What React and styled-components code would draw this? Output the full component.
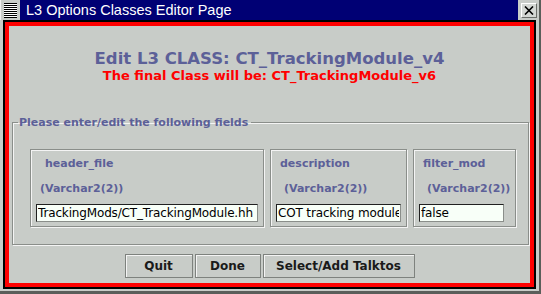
import React from "react";
import styled, { createGlobalStyle } from "styled-components";

const GlobalStyle = createGlobalStyle`
  html, body {
    margin: 0;
    padding: 0;
    background: #c8ccc8;
  }
`;

const Window = styled.div`
  display: flex;
  flex-direction: column;
  width: 541px;
  height: 294px;
  box-sizing: border-box;
  background: #c8ccc8;
  border-right: 2px solid #5a5e5a;
  border-bottom: 3px solid #5a5e5a;
  font-family: "DejaVu Sans", sans-serif;
`;

const TitleBar = styled.div`
  display: flex;
  align-items: stretch;
  height: 20px;
  flex-shrink: 0;
`;

const MenuBox = styled.div`
  width: 20px;
  box-sizing: border-box;
  padding: 3px 3px 2px 3px;
  background: #c8ccc8;
  border-left: 1px solid #f0f0f0;
`;

const MenuLines = styled.div`
  width: 100%;
  height: 100%;
  background: repeating-linear-gradient(
    to bottom,
    #000 0px,
    #000 1px,
    #fff 1px,
    #fff 2px
  );
`;

const TitleText = styled.div`
  flex: 1;
  display: flex;
  align-items: center;
  padding-left: 6px;
  background: #000074;
  color: #fff;
  font-family: "Liberation Sans", sans-serif;
  font-size: 14.5px;
`;

const CloseArea = styled.div`
  width: 21px;
  display: flex;
  align-items: center;
  justify-content: center;
  background: #c8ccc8;
`;

const CloseButton = styled.div`
  width: 16px;
  height: 15px;
  display: flex;
  align-items: center;
  justify-content: center;
  box-sizing: border-box;
  border: 1px solid #fff;
  border-right-color: #6a6e6a;
  border-bottom-color: #6a6e6a;
  background: #d4d8d4;
`;

const Body = styled.div`
  flex: 1;
  display: flex;
  margin: 0 3px 2px 3px;
  border: 2px solid #000;
`;

const RedFrame = styled.div`
  flex: 1;
  display: flex;
  flex-direction: column;
  align-items: center;
  border: 4px solid #ff0000;
  background: #c8ccc8;
`;

const Heading = styled.div`
  margin-top: 24px;
  font-size: 16.5px;
  font-weight: bold;
  color: #5c6098;
  line-height: 17px;
`;

const SubHeading = styled.div`
  margin-top: 2px;
  font-size: 13px;
  font-weight: bold;
  color: #ff0000;
  line-height: 13px;
`;

const Group = styled.fieldset`
  align-self: stretch;
  margin: 34px 1px 0 3px;
  padding: 20px 0 17px 17px;
  border: 1px solid #8a8e8a;
  box-shadow: inset 1px 1px 0 #f4f4f4, 1px 1px 0 #f4f4f4;
  display: flex;
  gap: 6px;
`;

const Legend = styled.legend`
  margin-left: -12px;
  padding: 0 3px 0 1px;
  font-size: 11px;
  font-weight: bold;
  color: #5c6098;
`;

const FieldPanel = styled.div`
  display: flex;
  flex-direction: column;
  padding: 0 5px 4px 5px;
  border: 1px solid #8a8e8a;
  box-shadow: inset 1px 1px 0 #f4f4f4, 1px 1px 0 #f4f4f4;
`;

const FieldName = styled.div`
  margin-top: 7px;
  padding-left: ${(p) => p.$indent}px;
  font-size: 11px;
  font-weight: bold;
  color: #5c6098;
  line-height: 14px;
`;

const FieldType = styled.div`
  margin-top: 11px;
  padding-left: ${(p) => p.$indent}px;
  font-size: 11px;
  font-weight: bold;
  color: #5c6098;
  line-height: 14px;
`;

const Input = styled.input`
  margin-top: 8px;
  width: ${(p) => p.$width}px;
  height: 18px;
  box-sizing: border-box;
  padding: 0 1px;
  border: 1px solid #202020;
  border-right-color: #8a8e8a;
  border-bottom-color: #8a8e8a;
  background: #f8fff8;
  font-family: "DejaVu Sans", sans-serif;
  font-size: 12px;
  letter-spacing: -0.15px;
  color: #000;
  outline: none;
`;

const ButtonRow = styled.div`
  display: flex;
  gap: 2px;
  margin-top: 9px;
`;

const Button = styled.button`
  width: ${(p) => p.$width}px;
  height: 24px;
  box-sizing: border-box;
  border: 1px solid #7e827e;
  box-shadow: inset 1px 1px 0 #f4f4f4;
  background: #c8ccc8;
  font-family: "DejaVu Sans", sans-serif;
  font-size: 12px;
  font-weight: bold;
  color: #1a1a1a;
  padding: 0;
`;

const fields = [
  { name: "header_file", nameIndent: 9, typeIndent: 4, value: "TrackingMods/CT_TrackingModule.hh", width: 222 },
  { name: "description", nameIndent: 4, typeIndent: 8, value: "COT tracking module", width: 125 },
  { name: "filter_mod", nameIndent: 4, typeIndent: 8, value: "false", width: 85 },
];

export default function App() {
  return (
    <>
      <GlobalStyle />
      <Window>
        <TitleBar>
          <MenuBox>
            <MenuLines />
          </MenuBox>
          <TitleText>L3 Options Classes Editor Page</TitleText>
          <CloseArea>
            <CloseButton>
              <svg width="10" height="9" viewBox="0 0 10 9">
                <path d="M1 0.5 L9 8.5 M9 0.5 L1 8.5" stroke="#000" strokeWidth="1.6" />
              </svg>
            </CloseButton>
          </CloseArea>
        </TitleBar>
        <Body>
          <RedFrame>
            <Heading>Edit L3 CLASS: CT_TrackingModule_v4</Heading>
            <SubHeading>The final Class will be: CT_TrackingModule_v6</SubHeading>
            <Group>
              <Legend>Please enter/edit the following fields</Legend>
              {fields.map((f) => (
                <FieldPanel key={f.name}>
                  <FieldName $indent={f.nameIndent}>{f.name}</FieldName>
                  <FieldType $indent={f.typeIndent}>(Varchar2(2))</FieldType>
                  <Input $width={f.width} defaultValue={f.value} />
                </FieldPanel>
              ))}
            </Group>
            <ButtonRow>
              <Button $width={68}>Quit</Button>
              <Button $width={66}>Done</Button>
              <Button $width={152}>Select/Add Talktos</Button>
            </ButtonRow>
          </RedFrame>
        </Body>
      </Window>
    </>
  );
}
